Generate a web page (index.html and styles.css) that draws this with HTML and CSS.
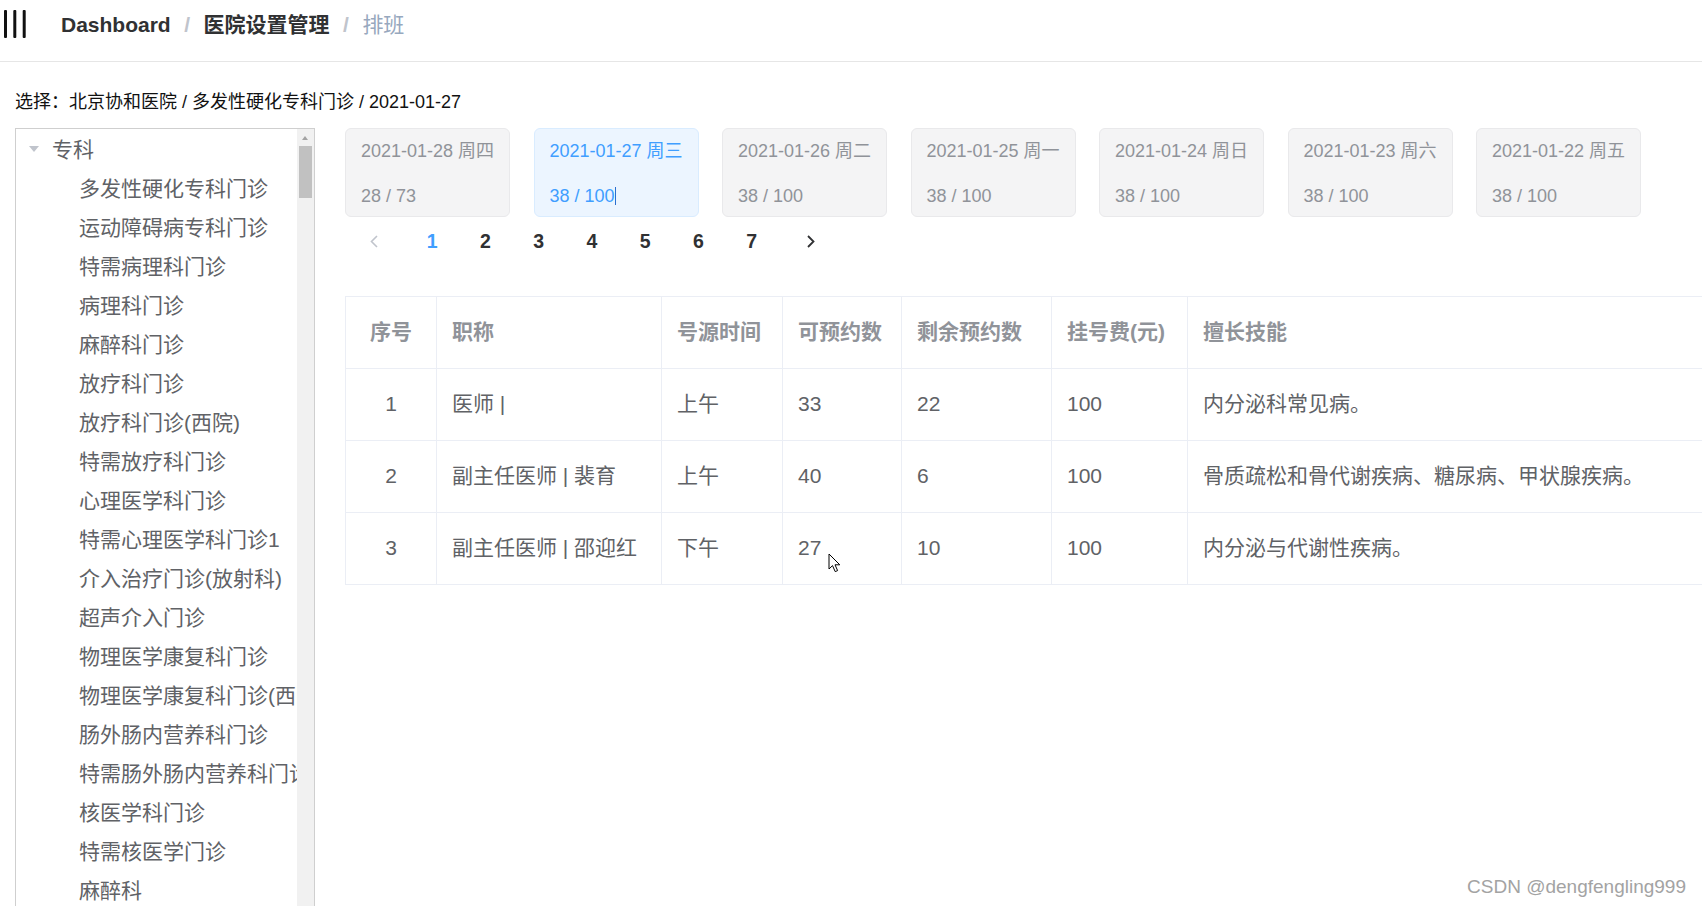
FILE: index.html
```html
<!DOCTYPE html>
<html lang="zh-CN">
<head>
<meta charset="utf-8">
<title>排班</title>
<link rel="stylesheet" href="styles.css">
</head>
<body>
<div class="navbar">
  <div class="nav-row">
    <svg class="hamburger" width="24" height="30" viewBox="0 0 24 30">
      <rect x="1" y="0" width="3" height="28" rx="1" fill="#111"/>
      <rect x="10.3" y="0" width="3" height="28" rx="1" fill="#111"/>
      <rect x="19.7" y="0" width="3" height="28" rx="1" fill="#111"/>
    </svg>
    <div class="breadcrumb">
      <span class="bc-item">Dashboard</span><span class="bc-sep">/</span><span class="bc-item">医院设置管理</span><span class="bc-sep">/</span><span class="bc-last">排班</span>
    </div>
  </div>
</div>

<div class="app-main">
  <div class="selected">选择：北京协和医院 / 多发性硬化专科门诊 / 2021-01-27</div>
  <div class="layout">
    <div class="tree-box">
      <div class="tree">
        <div class="node lvl1"><span class="caret"></span><span class="label">专科</span></div>
        <div class="node lvl2"><span class="leaf"></span><span class="label">多发性硬化专科门诊</span></div>
        <div class="node lvl2"><span class="leaf"></span><span class="label">运动障碍病专科门诊</span></div>
        <div class="node lvl2"><span class="leaf"></span><span class="label">特需病理科门诊</span></div>
        <div class="node lvl2"><span class="leaf"></span><span class="label">病理科门诊</span></div>
        <div class="node lvl2"><span class="leaf"></span><span class="label">麻醉科门诊</span></div>
        <div class="node lvl2"><span class="leaf"></span><span class="label">放疗科门诊</span></div>
        <div class="node lvl2"><span class="leaf"></span><span class="label">放疗科门诊(西院)</span></div>
        <div class="node lvl2"><span class="leaf"></span><span class="label">特需放疗科门诊</span></div>
        <div class="node lvl2"><span class="leaf"></span><span class="label">心理医学科门诊</span></div>
        <div class="node lvl2"><span class="leaf"></span><span class="label">特需心理医学科门诊1</span></div>
        <div class="node lvl2"><span class="leaf"></span><span class="label">介入治疗门诊(放射科)</span></div>
        <div class="node lvl2"><span class="leaf"></span><span class="label">超声介入门诊</span></div>
        <div class="node lvl2"><span class="leaf"></span><span class="label">物理医学康复科门诊</span></div>
        <div class="node lvl2"><span class="leaf"></span><span class="label">物理医学康复科门诊(西院)</span></div>
        <div class="node lvl2"><span class="leaf"></span><span class="label">肠外肠内营养科门诊</span></div>
        <div class="node lvl2"><span class="leaf"></span><span class="label">特需肠外肠内营养科门诊</span></div>
        <div class="node lvl2"><span class="leaf"></span><span class="label">核医学科门诊</span></div>
        <div class="node lvl2"><span class="leaf"></span><span class="label">特需核医学门诊</span></div>
        <div class="node lvl2"><span class="leaf"></span><span class="label">麻醉科</span></div>
      </div>
      <div class="scrollbar">
        <div class="sb-arrow"></div>
        <div class="sb-thumb"></div>
      </div>
    </div>

    <div class="right">
      <div class="cards">
        <div class="card"><div class="c-date">2021-01-28 周四</div><div class="c-num">28 / 73</div></div>
        <div class="card active"><div class="c-date">2021-01-27 周三</div><div class="c-num">38 / 100<span class="caret-line"></span></div></div>
        <div class="card"><div class="c-date">2021-01-26 周二</div><div class="c-num">38 / 100</div></div>
        <div class="card"><div class="c-date">2021-01-25 周一</div><div class="c-num">38 / 100</div></div>
        <div class="card"><div class="c-date">2021-01-24 周日</div><div class="c-num">38 / 100</div></div>
        <div class="card"><div class="c-date">2021-01-23 周六</div><div class="c-num">38 / 100</div></div>
        <div class="card"><div class="c-date">2021-01-22 周五</div><div class="c-num">38 / 100</div></div>
      </div>

      <div class="pagination">
        <div class="btn-prev">
          <svg width="8" height="13" viewBox="0 0 8 13"><polyline points="7,1 1.5,6.5 7,12" fill="none" stroke="#c0c4cc" stroke-width="1.6"/></svg>
        </div>
        <ul class="pager">
          <li class="on">1</li><li>2</li><li>3</li><li>4</li><li>5</li><li>6</li><li>7</li>
        </ul>
        <div class="btn-next">
          <svg width="8" height="13" viewBox="0 0 8 13"><polyline points="1,1 6.5,6.5 1,12" fill="none" stroke="#303133" stroke-width="1.8"/></svg>
        </div>
      </div>

      <table class="schedule">
        <colgroup>
          <col class="w-idx"><col class="w-title"><col class="w-time"><col class="w-avail"><col class="w-left"><col class="w-fee"><col class="w-skill">
        </colgroup>
        <thead>
          <tr><th class="center">序号</th><th>职称</th><th>号源时间</th><th>可预约数</th><th>剩余预约数</th><th>挂号费(元)</th><th>擅长技能</th></tr>
        </thead>
        <tbody>
          <tr><td class="center">1</td><td>医师 |</td><td>上午</td><td>33</td><td>22</td><td>100</td><td>内分泌科常见病。</td></tr>
          <tr><td class="center">2</td><td>副主任医师 | 裴育</td><td>上午</td><td>40</td><td>6</td><td>100</td><td>骨质疏松和骨代谢疾病、糖尿病、甲状腺疾病。</td></tr>
          <tr><td class="center">3</td><td>副主任医师 | 邵迎红</td><td>下午</td><td>27</td><td>10</td><td>100</td><td>内分泌与代谢性疾病。</td></tr>
        </tbody>
      </table>
    </div>
  </div>
</div>

<div class="watermark">CSDN @dengfengling999</div>

<svg class="mouse" width="14" height="20" viewBox="0 0 14 20">
  <path d="M1,1 L1,16 L4.5,12.6 L7.2,18.6 L9.6,17.6 L7,11.8 L11.8,11.8 Z" fill="#fff" stroke="#000" stroke-width="1" stroke-linejoin="round"/>
</svg>
</body>
</html>
```

FILE: styles.css
```css
html, body {
  margin: 0;
  padding: 0;
  height: 906px;
  overflow: hidden;
  background: #fff;
  font-family: "Liberation Sans", "Noto Sans CJK SC", sans-serif;
}

/* ---------- navbar ---------- */
.navbar {
  height: 61px;
  border-bottom: 1px solid #e6e6e6;
}
.nav-row {
  height: 50px;
  display: flex;
  align-items: center;
}
.hamburger {
  display: block;
  margin-left: 3px;
}
.breadcrumb {
  margin-left: 34px;
  font-size: 21px;
  line-height: 50px;
  white-space: nowrap;
}
.bc-item {
  font-weight: 700;
  color: #303133;
}
.bc-sep {
  margin: 0 13.5px;
  font-weight: 700;
  color: #c0c4cc;
}
.bc-last {
  color: #97a8be;
}

/* ---------- main ---------- */
.app-main {
  padding: 27px 0 0 15px;
}
.selected {
  font-size: 18px;
  line-height: 27px;
  color: #111;
  white-space: nowrap;
}
.layout {
  display: flex;
  align-items: flex-start;
  margin-top: 12px;
}

/* ---------- tree ---------- */
.tree-box {
  flex: none;
  width: 298px;
  height: 800px;
  border: 1px solid #cfcfcf;
  display: flex;
  overflow: hidden;
}
.tree {
  flex: 1;
  min-width: 0;
  overflow: hidden;
}
.node {
  box-sizing: border-box;
  height: 39px;
  padding-bottom: 2px;
  display: flex;
  align-items: center;
  white-space: nowrap;
  font-size: 21px;
  color: #606266;
}
.node.lvl2 {
  padding-left: 27px;
}
.caret, .leaf {
  flex: none;
  width: 36px;
  height: 37px;
  position: relative;
}
.caret::before {
  content: "";
  position: absolute;
  left: 13px;
  top: 17px;
  border-left: 5px solid transparent;
  border-right: 5px solid transparent;
  border-top: 6px solid #c0c4cc;
}
.label {
  white-space: nowrap;
}
.scrollbar {
  flex: none;
  width: 17px;
  background: #f1f1f1;
  position: relative;
}
.sb-arrow {
  position: absolute;
  left: 5px;
  top: 7px;
  border-left: 3.5px solid transparent;
  border-right: 3.5px solid transparent;
  border-bottom: 4px solid #a3a3a3;
}
.sb-thumb {
  position: absolute;
  left: 2px;
  right: 2px;
  top: 17px;
  height: 52px;
  background: #c1c1c1;
}

/* ---------- right panel ---------- */
.right {
  flex: none;
  margin-left: 30px;
}
.cards {
  display: flex;
  gap: 23.5px;
}
.card {
  width: 134px;
  padding: 9px 14px 6px 15px;
  border: 1px solid #e9e9eb;
  border-radius: 6px;
  background: #f4f4f5;
  color: #909399;
  font-size: 18px;
  line-height: 27px;
  white-space: nowrap;
}
.card.active {
  background: #ecf5ff;
  border-color: #d9ecff;
  color: #409eff;
}
.c-num {
  margin-top: 18px;
}
.caret-line {
  display: inline-block;
  width: 1px;
  height: 18px;
  background: #2a6fd0;
  vertical-align: -3px;
}

/* ---------- pagination ---------- */
.pagination {
  display: flex;
  align-items: center;
  height: 42px;
  margin-top: 3px;
}
.btn-prev, .btn-next {
  width: 53px;
  height: 42px;
  display: flex;
  align-items: center;
  justify-content: center;
}
.btn-prev {
  margin-left: 2px;
}
.btn-next {
  margin-left: 6px;
}
.btn-prev svg, .btn-next svg {
  display: block;
}
.pager {
  display: flex;
  list-style: none;
  margin: 0 0 0 5.5px;
  padding: 0;
}
.pager li {
  width: 53.25px;
  text-align: center;
  font-size: 19.5px;
  font-weight: 700;
  line-height: 42px;
  color: #303133;
}
.pager li.on {
  color: #409eff;
}

/* ---------- table ---------- */
.schedule {
  margin-top: 34px;
  width: 1442px;
  table-layout: fixed;
  border-collapse: collapse;
  border-left: 1px solid #ebeef5;
  border-top: 1px solid #ebeef5;
  font-size: 21px;
}
.w-idx { width: 91px; }
.w-title { width: 225px; }
.w-time { width: 121px; }
.w-avail { width: 119px; }
.w-left { width: 150px; }
.w-fee { width: 136px; }
.w-skill { width: 600px; }
.schedule th, .schedule td {
  padding: 17px 15px 19px;
  line-height: 35px;
  border-right: 1px solid #ebeef5;
  border-bottom: 1px solid #ebeef5;
  text-align: left;
  white-space: nowrap;
  overflow: hidden;
}
.schedule th {
  color: #909399;
  font-weight: 700;
}
.schedule td {
  color: #606266;
}
.schedule .center {
  text-align: center;
}

/* ---------- overlays ---------- */
.watermark {
  position: absolute;
  right: 16px;
  bottom: 8px;
  font-size: 19px;
  color: #a3a3a3;
  text-shadow: 0 0 1px #fff;
  white-space: nowrap;
}
.mouse {
  position: absolute;
  left: 828px;
  top: 553px;
}
```
